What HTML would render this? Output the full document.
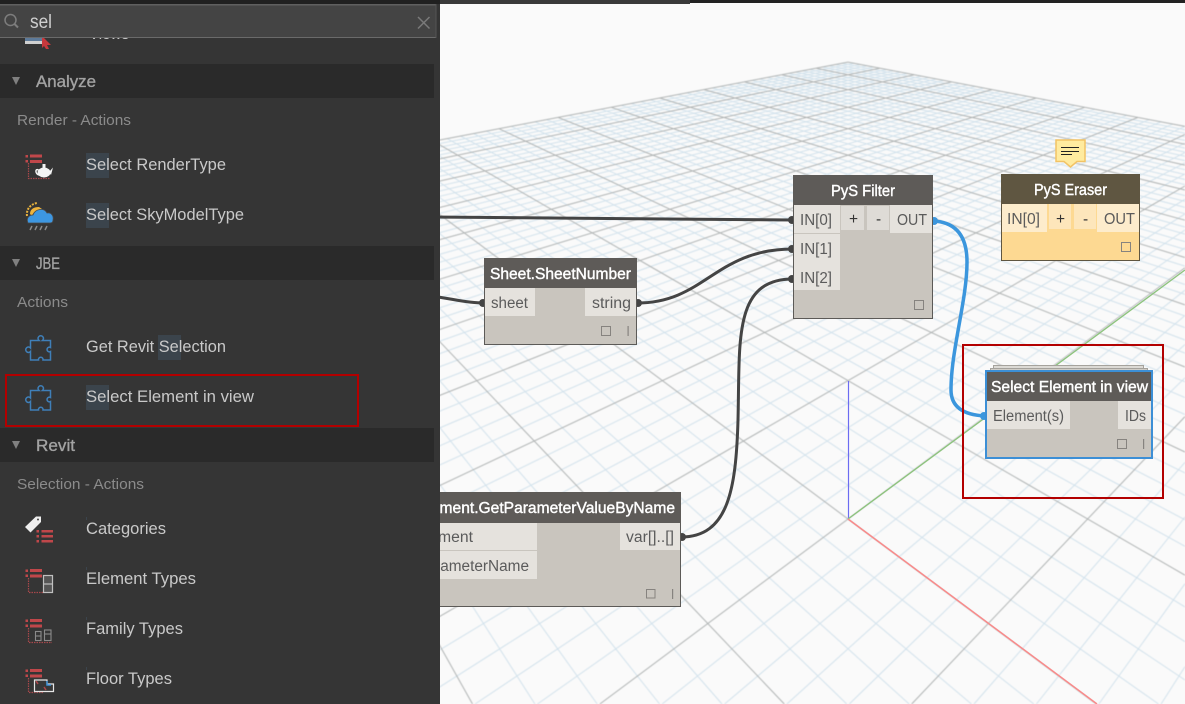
<!DOCTYPE html>
<html><head><meta charset="utf-8"><style>
html,body{margin:0;padding:0;background:#fafafa;width:1185px;height:704px;overflow:hidden}
svg{display:block}
text{font-family:"Liberation Sans",sans-serif}
.it{font-size:16.5px;fill:#c9c9c9}
.sec{font-size:16.5px;fill:#a2a2a2;stroke:#a2a2a2;stroke-width:.35px}
.sub{font-size:15px;fill:#8b8b8b}
.p{font-size:15.5px;fill:#5b5b5b}
.t{font-size:15.5px;fill:#fff;stroke:#fff;stroke-width:.4px}
.w{fill:none;stroke:#444;stroke-width:3}
.bar{fill:#c0474a}
.dot{fill:none;stroke:#a8484b;stroke-width:1.2;stroke-dasharray:1.5 1}
</style></head><body>
<svg xmlns="http://www.w3.org/2000/svg" width="1185" height="704" viewBox="0 0 1185 704" lang="en">
<rect width="1185" height="704" fill="#fafafa"/>
<g style="filter:blur(0.4px)">
<path id="minor" fill="none" stroke="#d2e2ec" stroke-width="1"/>
<path id="major" fill="none" stroke="#b0b4b4" stroke-width="1"/>
</g>
<!-- axes -->
<line x1="848.5" y1="519" x2="848.5" y2="381" stroke="#6c6cf2" stroke-width="1.2"/>
<line x1="848" y1="519" x2="1185" y2="270" stroke="#8cc47c" stroke-width="1.3"/>
<line x1="848" y1="519" x2="1097" y2="704" stroke="#f98a8a" stroke-width="1.5"/>
<!-- top strip -->
<rect x="440" y="0" width="250" height="4" fill="#3a3a3a"/><rect x="690" y="0" width="495" height="3" fill="#222"/>
<!-- wires -->
<path class="w" d="M430,217 C560,218 680,220 793,220"/>
<path class="w" d="M430,296 C450,298 465,303 484,303"/>
<path class="w" d="M637,303 C705,303 715,249 793,249"/>
<path class="w" d="M681,537 C728,537 736,490 738,420 C740,340 733,279 793,279"/>
<path d="M933,221 C955,222 967,235 967,262 C967,300 951,350 951,390 C951,408 965,415 985,416" fill="none" stroke="#3b96dd" stroke-width="3.5"/>
<!-- port nubs -->
<g fill="#444"><circle cx="792" cy="220" r="4"/><circle cx="792" cy="249" r="4"/><circle cx="792" cy="279" r="4"/><circle cx="483" cy="303" r="4"/><circle cx="638" cy="303" r="4"/><circle cx="682" cy="537" r="4"/></g>
<circle cx="934" cy="221" r="4" fill="#3b96dd"/><circle cx="984" cy="416" r="4" fill="#3b96dd"/>

<!-- PyS Filter -->
<rect x="793.5" y="175.5" width="139" height="143" fill="#c9c5be" stroke="#5c5a57"/>
<rect x="793" y="175" width="140" height="30" fill="#5e5b58"/>
<g fill="#e5e2dd"><rect x="794" y="205" width="46" height="28"/><rect x="794" y="234" width="46" height="56"/><rect x="890" y="205" width="42" height="28"/></g>
<rect x="841" y="206" width="23" height="24" fill="#dedbd6"/><rect x="867" y="206" width="22" height="24" fill="#dedbd6"/>
<text class="t" x="831" y="196" textLength="64" lengthAdjust="spacingAndGlyphs">PyS Filter</text>
<text class="p" x="800" y="225" textLength="32" lengthAdjust="spacingAndGlyphs">IN[0]</text>
<text class="p" x="800" y="254" textLength="32" lengthAdjust="spacingAndGlyphs">IN[1]</text>
<text class="p" x="800" y="283" textLength="32" lengthAdjust="spacingAndGlyphs">IN[2]</text>
<text class="p" x="849" y="224" style="fill:#333">+</text><text class="p" x="876" y="224" style="fill:#333">-</text>
<text class="p" x="897" y="225" textLength="30" lengthAdjust="spacingAndGlyphs">OUT</text>
<rect x="914.5" y="300.5" width="9" height="9" fill="none" stroke="#86837f" stroke-width="1"/>

<!-- note -->
<path d="M1056,140 H1085 V161.500 H1077 L1070.500,167 L1064,161.500 H1056 Z" fill="#ffeb9f" stroke="#f2c365" stroke-width="1.500"/>
<g stroke="#222" stroke-width="1"><line x1="1061" y1="147.500" x2="1079" y2="147.500"/><line x1="1061" y1="151.500" x2="1079" y2="151.500"/><line x1="1061" y1="154.500" x2="1072" y2="154.500"/></g>
<!-- PyS Eraser -->
<rect x="1001.500" y="174.500" width="138" height="86" fill="#fdd992" stroke="#5f5641"/>
<rect x="1001" y="174" width="139" height="30" fill="#5f5641"/>
<g fill="#fdeccc"><rect x="1002" y="204" width="45" height="28"/><rect x="1097" y="204" width="42" height="28"/></g>
<rect x="1049" y="204" width="22" height="25" fill="#fde6bb"/><rect x="1074" y="204" width="22" height="25" fill="#fde6bb"/>
<text class="t" x="1034" y="195" textLength="73" lengthAdjust="spacingAndGlyphs">PyS Eraser</text>
<text class="p" x="1007" y="224" textLength="33" lengthAdjust="spacingAndGlyphs">IN[0]</text>
<text class="p" x="1056" y="224" style="fill:#333">+</text><text class="p" x="1083" y="224" style="fill:#333">-</text>
<text class="p" x="1104" y="224" textLength="31" lengthAdjust="spacingAndGlyphs">OUT</text>
<rect x="1121.500" y="242.500" width="9" height="9" fill="none" stroke="#86837f"/>

<!-- Sheet.SheetNumber -->
<rect x="484.500" y="258.500" width="152" height="86" fill="#c9c5be" stroke="#5c5a57"/>
<rect x="484" y="258" width="153" height="30" fill="#5e5b58"/>
<rect x="485" y="288" width="50" height="28" fill="#e5e2dd"/><rect x="585" y="288" width="51" height="28" fill="#e5e2dd"/>
<text class="t" x="490" y="279" textLength="141" lengthAdjust="spacingAndGlyphs">Sheet.SheetNumber</text>
<text class="p" x="491" y="308" textLength="37" lengthAdjust="spacingAndGlyphs">sheet</text>
<text class="p" x="592" y="308" textLength="39" lengthAdjust="spacingAndGlyphs">string</text>
<rect x="601.500" y="326.500" width="9" height="9" fill="none" stroke="#86837f"/><rect x="627.500" y="326" width="1.200" height="10" fill="#86837f"/>

<!-- GetParameterValueByName -->
<rect x="400.500" y="492.500" width="280" height="114" fill="#c9c5be" stroke="#5c5a57"/>
<rect x="400" y="492" width="281" height="31" fill="#5e5b58"/>
<rect x="400" y="523" width="137" height="27" fill="#e5e2dd"/><rect x="400" y="551" width="137" height="28" fill="#e5e2dd"/><rect x="620" y="523" width="60" height="27" fill="#e5e2dd"/>
<text class="t" x="417" y="513" textLength="258" lengthAdjust="spacingAndGlyphs">Element.GetParameterValueByName</text>
<text class="p" x="417" y="542" textLength="56" lengthAdjust="spacingAndGlyphs">element</text>
<text class="p" x="418" y="571" textLength="111" lengthAdjust="spacingAndGlyphs">parameterName</text>
<text class="p" x="626" y="542" textLength="48" lengthAdjust="spacingAndGlyphs">var[]..[]</text>
<rect x="646.500" y="589.500" width="8.500" height="8.500" fill="none" stroke="#86837f"/><rect x="672" y="589" width="1.200" height="10" fill="#86837f"/>

<!-- Select Element -->
<rect x="993.500" y="365.500" width="150" height="6" fill="#dcdad5" stroke="#a5a29c"/>
<rect x="990.500" y="368.500" width="157" height="4" fill="#cfccc6" stroke="#a5a29c"/>
<rect x="986" y="371" width="166" height="87" fill="#c9c5be" stroke="#3c8fd6" stroke-width="2"/>
<rect x="987" y="372" width="164" height="29" fill="#5e5b58"/>
<rect x="987" y="401" width="83" height="28" fill="#e5e2dd"/><rect x="1118" y="401" width="33" height="28" fill="#e5e2dd"/>
<text class="t" x="991" y="392" textLength="157" lengthAdjust="spacingAndGlyphs">Select Element in view</text>
<text class="p" x="993" y="421" textLength="71" lengthAdjust="spacingAndGlyphs">Element(s)</text>
<text class="p" x="1125" y="421" textLength="21" lengthAdjust="spacingAndGlyphs">IDs</text>
<rect x="1117.500" y="439.500" width="9" height="9" fill="none" stroke="#86837f"/><rect x="1143" y="439" width="1.200" height="10" fill="#86837f"/>
<rect x="963" y="345" width="200" height="153" fill="none" stroke="#b30000" stroke-width="2"/>

<!-- SIDEBAR -->
<rect x="0" y="0" width="440" height="704" fill="#353535"/>
<rect x="0" y="0" width="440" height="4" fill="#202020"/>
<!-- Views partial -->
<rect x="25" y="33" width="18" height="11" fill="#5d7a99"/><rect x="25" y="41" width="18" height="3" fill="#d0d0d0"/>
<path d="M42,36 L51,45 H47 L49,49 L46,49 L44,46 L42,48 Z" fill="#c8383c"/>
<text class="it" x="89" y="39" textLength="40" lengthAdjust="spacingAndGlyphs">Views</text>
<!-- search -->
<rect x="0" y="4" width="436" height="34" fill="#444"/>
<rect x="0" y="4" width="436" height="1.500" fill="#5f5f5f"/><rect x="0" y="37" width="436" height="1" fill="#6a6a6a"/>
<rect x="435.500" y="4" width="1" height="34" fill="#555"/>
<circle cx="10.500" cy="20" r="5.500" fill="none" stroke="#7d7d7d" stroke-width="1.500"/><line x1="14.500" y1="24" x2="18" y2="27.500" stroke="#7d7d7d" stroke-width="2"/>
<text x="30" y="28" font-size="19" fill="#cfcfcf" textLength="22" lengthAdjust="spacingAndGlyphs">sel</text>
<path d="M418,17 L429.500,28.500 M429.500,17 L418,28.500" stroke="#7a7a7a" stroke-width="1.500"/>

<!-- bands -->
<rect x="0" y="64" width="434" height="34" fill="#2a2a2a"/><rect x="0" y="246" width="434" height="34" fill="#2a2a2a"/><rect x="0" y="428" width="434" height="34" fill="#2a2a2a"/>
<g fill="#808080"><path d="M12,77 H20 L16,85 Z"/><path d="M12,259 H20 L16,267 Z"/><path d="M12,441 H20 L16,449 Z"/></g>
<text class="sec" x="36" y="87" textLength="60" lengthAdjust="spacingAndGlyphs">Analyze</text>
<text class="sec" x="36" y="269" textLength="24" lengthAdjust="spacingAndGlyphs">JBE</text>
<text class="sec" x="36" y="451" textLength="39" lengthAdjust="spacingAndGlyphs">Revit</text>
<text class="sub" x="17" y="125" textLength="114" lengthAdjust="spacingAndGlyphs">Render - Actions</text>
<text class="sub" x="17" y="307" textLength="51" lengthAdjust="spacingAndGlyphs">Actions</text>
<text class="sub" x="17" y="489" textLength="127" lengthAdjust="spacingAndGlyphs">Selection - Actions</text>

<!-- highlights -->
<g fill="#3b444c"><rect x="86" y="153" width="23" height="25"/><rect x="86" y="203" width="23" height="25"/><rect x="158" y="335" width="23" height="25"/><rect x="86" y="385" width="23" height="25"/>
<rect x="86" y="517" width="1" height="3"/><rect x="86" y="567" width="1" height="3"/><rect x="86" y="617" width="1" height="3"/><rect x="86" y="667" width="1" height="3"/></g>
<text class="it" x="86" y="170" textLength="140" lengthAdjust="spacingAndGlyphs">Select RenderType</text>
<text class="it" x="86" y="220" textLength="158" lengthAdjust="spacingAndGlyphs">Select SkyModelType</text>
<text class="it" x="86" y="352" textLength="140" lengthAdjust="spacingAndGlyphs">Get Revit Selection</text>
<text class="it" x="86" y="402" textLength="168" lengthAdjust="spacingAndGlyphs">Select Element in view</text>
<text class="it" x="86" y="534" textLength="80" lengthAdjust="spacingAndGlyphs">Categories</text>
<text class="it" x="86" y="584" textLength="110" lengthAdjust="spacingAndGlyphs">Element Types</text>
<text class="it" x="86" y="634" textLength="97" lengthAdjust="spacingAndGlyphs">Family Types</text>
<text class="it" x="86" y="684" textLength="86" lengthAdjust="spacingAndGlyphs">Floor Types</text>
<rect x="6" y="375" width="352" height="51" fill="none" stroke="#b30000" stroke-width="2"/>

<!-- icon: render -->
<g><rect class="bar" x="30" y="154.500" width="12" height="3"/><rect class="bar" x="30" y="160" width="12" height="3"/><rect class="bar" x="25.500" y="155" width="2.500" height="2.500"/><rect class="bar" x="25.500" y="160" width="2.500" height="2.500"/>
<path class="dot" d="M28.500,163 V178.500 H50"/>
<ellipse cx="44" cy="172.500" rx="6.500" ry="5" fill="#f4f4f4"/><rect x="42.500" y="164" width="3" height="4" fill="#f4f4f4"/>
<path d="M49,172 L53,167.500 L51,175 Z" fill="#f4f4f4"/><path d="M38.500,170 C35,168 35,174 39,175" fill="none" stroke="#f4f4f4" stroke-width="1.500"/></g>
<!-- icon: sky -->
<g><path d="M27,216 C26,209 31,204 37,203" fill="none" stroke="#e8b23d" stroke-width="2" stroke-dasharray="2 1.200"/>
<path d="M30,214 C30,209 34,207 39,207 L42,209 C37,210 33,212 32,216 Z" fill="#efb43c"/>
<path d="M28,223 C26,218 29,215 33,215 C35,209 44,207 47,213 C51,212 54,216 53,220 C53,222 52,223 50,223 Z" fill="#3d97e2" stroke="#4a4a4a" stroke-width="0.800"/>
<path d="M30,230 L32,226 M35,230 L37,226 M40,230 L42,226 M45,230 L47,226" stroke="#8a8a8a" stroke-width="1.500"/></g>
<!-- icon: puzzle -->
<defs><path id="pz" d="M30.500,340.500 H39 A2.700,2.700 0 1 1 42.500,340.500 H50.500 V347.500 A2.300,2.300 0 1 0 50.500,351.500 V360 H43 A2.300,2.300 0 1 0 38.500,360 H30.500 V351.500 A2.700,2.700 0 1 1 30.500,348 Z" fill="none" stroke="#3f7fb8" stroke-width="1.500"/></defs>
<use href="#pz"/><use href="#pz" y="50"/>
<!-- icon: categories -->
<g><path d="M25,527 L36,516.500 H41 V522 L30.500,532.500 Z" fill="#eee"/><circle cx="38" cy="519.500" r="1" fill="#444"/>
<rect class="bar" x="41.500" y="530" width="11.500" height="2.500"/><rect class="bar" x="41.500" y="535" width="11.500" height="2.500"/><rect class="bar" x="41.500" y="540" width="11.500" height="2.500"/>
<rect class="bar" x="36.500" y="530" width="2.500" height="2.500"/><rect class="bar" x="36.500" y="535" width="2.500" height="2.500"/><rect class="bar" x="36.500" y="540" width="2.500" height="2.500"/></g>
<!-- icon: element types -->
<g><rect class="bar" x="30" y="569" width="12" height="3"/><rect class="bar" x="30" y="574.500" width="12" height="3"/><rect class="bar" x="25.500" y="569.500" width="2.500" height="2.500"/><rect class="bar" x="25.500" y="574.500" width="2.500" height="2.500"/>
<path class="dot" d="M28.500,578 V592.500 H43"/>
<rect x="43.500" y="575.500" width="9" height="17" fill="#555" stroke="#c0c0c0" stroke-width="1.200"/><line x1="43" y1="584" x2="53" y2="584" stroke="#c0c0c0" stroke-width="1.200"/></g>
<!-- icon: family types -->
<g><rect class="bar" x="30" y="619" width="12" height="3"/><rect class="bar" x="30" y="624.500" width="12" height="3"/><rect class="bar" x="25.500" y="619.500" width="2.500" height="2.500"/><rect class="bar" x="25.500" y="624.500" width="2.500" height="2.500"/>
<path class="dot" d="M28.500,628 V642.500 H52"/>
<g fill="none" stroke="#8a8a8a" stroke-width="1.100"><rect x="35.500" y="631.500" width="5.500" height="9"/><line x1="35" y1="636" x2="41" y2="636"/><rect x="44.500" y="630" width="6.500" height="10.500"/><line x1="44" y1="634" x2="51" y2="634"/></g></g>
<!-- icon: floor types -->
<g><rect class="bar" x="30" y="669" width="12" height="3"/><rect class="bar" x="30" y="674.500" width="12" height="3"/><rect class="bar" x="25.500" y="669.500" width="2.500" height="2.500"/><rect class="bar" x="25.500" y="674.500" width="2.500" height="2.500"/>
<path class="dot" d="M28.500,678 V692.500 H43"/>
<path d="M34.500,680 H47 V684 H53.500 V691.500 H34.500 Z" fill="#383838" stroke="#e6e6e6" stroke-width="1.200"/>
<path d="M47,681 V685 H51" fill="none" stroke="#3d8fd6" stroke-width="1.500"/><path d="M36,681 L38,684 M44,687 L46,690" stroke="#b0474a" stroke-width="1.500"/></g>
</svg>
<script>
(function(){
var A=119.8,B=-13.8,k=0.1455;
function P(u,v){var s=u+v,t=v-u,d=1+k*t;return [848+A*s/d,(519+B*t)/d];}
var X0=436,X1=1185,Y0=0,Y1=704;
function seg(a,b){
  var t0=0,t1=1,dx=b[0]-a[0],dy=b[1]-a[1];
  var p=[-dx,dx,-dy,dy],q=[a[0]-X0,X1-a[0],a[1]-Y0,Y1-a[1]];
  for(var i=0;i<4;i++){
    if(p[i]===0){if(q[i]<0)return '';}
    else{var r=q[i]/p[i];
      if(p[i]<0){if(r>t1)return '';if(r>t0)t0=r;}
      else{if(r<t0)return '';if(r<t1)t1=r;}}
  }
  return 'M'+(a[0]+t0*dx).toFixed(1)+','+(a[1]+t0*dy).toFixed(1)+'L'+(a[0]+t1*dx).toFixed(1)+','+(a[1]+t1*dy).toFixed(1);
}
var mi='',ma='';
for(var i=-50;i<=50;i++){
  var c=i/5,lo=Math.max(-10,c-6),hi=Math.min(10,c+6);
  var s=seg(P(c,lo),P(c,10))+seg(P(-10,c),P(hi,c));
  if(i%5===0)ma+=s;else mi+=s;
}
document.getElementById('minor').setAttribute('d',mi);
document.getElementById('major').setAttribute('d',ma);
})();
</script>
</body></html>
